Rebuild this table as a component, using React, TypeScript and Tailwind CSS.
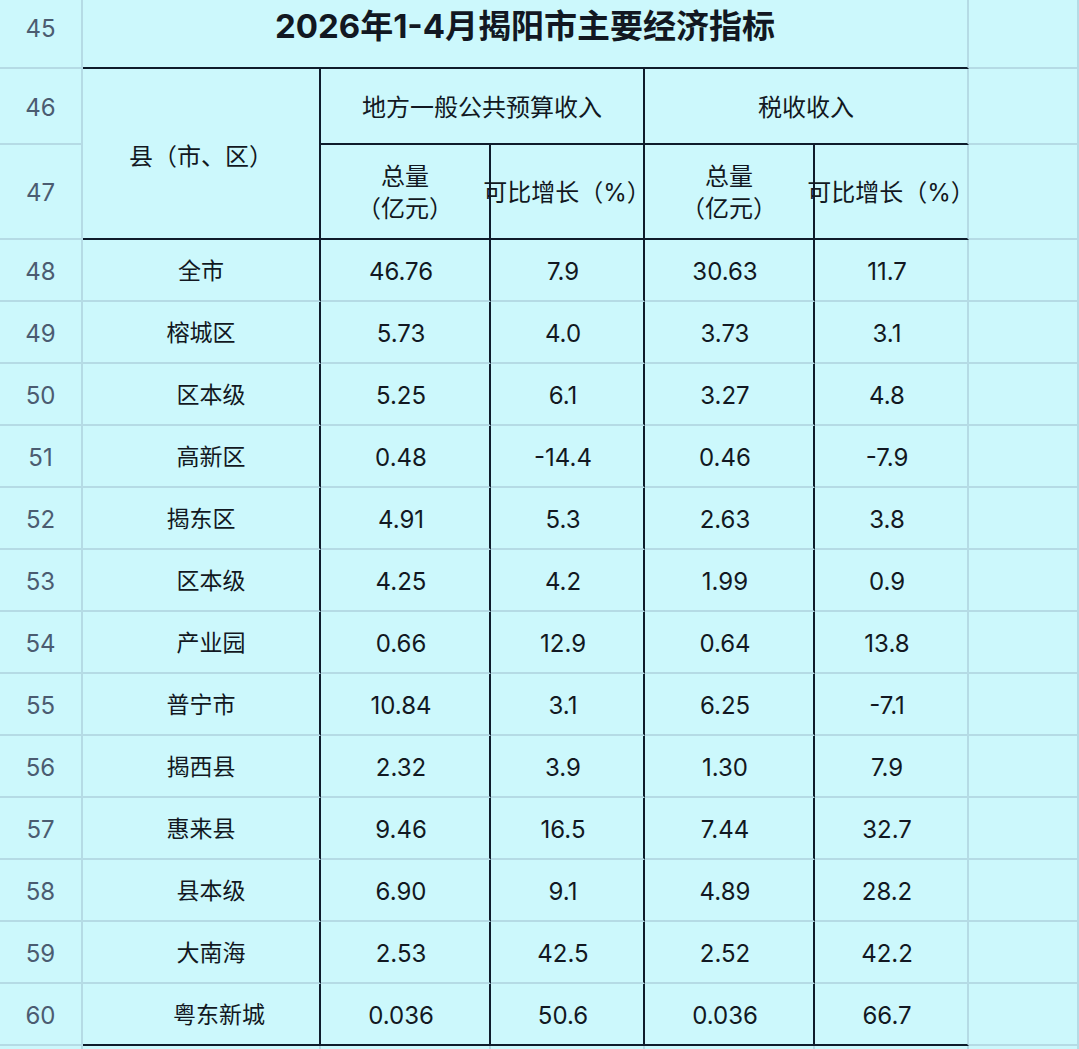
const FONT = "font-['Inter','Noto_Sans_CJK_SC',sans-serif]";

type Row = [number, string, string, string, string, string, string];

// [row no, name, budget total, budget growth, tax total, tax growth, name indent]
const rows: Row[] = [
  [48, "全市", "46.76", "7.9", "30.63", "11.7", ""],
  [49, "榕城区", "5.73", "4.0", "3.73", "3.1", ""],
  [50, "区本级", "5.25", "6.1", "3.27", "4.8", "pl-[20px]"],
  [51, "高新区", "0.48", "-14.4", "0.46", "-7.9", "pl-[20px]"],
  [52, "揭东区", "4.91", "5.3", "2.63", "3.8", ""],
  [53, "区本级", "4.25", "4.2", "1.99", "0.9", "pl-[20px]"],
  [54, "产业园", "0.66", "12.9", "0.64", "13.8", "pl-[20px]"],
  [55, "普宁市", "10.84", "3.1", "6.25", "-7.1", ""],
  [56, "揭西县", "2.32", "3.9", "1.30", "7.9", ""],
  [57, "惠来县", "9.46", "16.5", "7.44", "32.7", ""],
  [58, "县本级", "6.90", "9.1", "4.89", "28.2", "pl-[20px]"],
  [59, "大南海", "2.53", "42.5", "2.52", "42.2", "pl-[20px]"],
  [60, "粤东新城", "0.036", "50.6", "0.036", "66.7", "pl-[36px]"],
];

const cell = "flex items-center justify-center border-b-2 border-r-2 border-[#b5dbe5] pt-[3px] text-[#121822]";
const rowNo = "flex items-center justify-center border-b-2 border-r-2 border-[#b5dbe5] pt-[3px] text-[24px] text-[#4b5c71]";

export default function App() {
  return (
    <div className={`h-[1049px] w-[1079px] overflow-hidden bg-[#ccf8fc] ${FONT}`}>
      <div className="grid grid-cols-[83px_238px_170px_154px_170px_154px_1fr] grid-rows-[69px_76px_95px_repeat(14,62px)]">
        {/* Title row */}
        <div className={`${rowNo} !pt-0 pb-[10px]`}>45</div>
        <div className={`${cell} col-span-5 !pt-0 pb-[14px] text-[33px] font-bold !border-b-[#0f1c2b] text-[#0d121a]`}>
          2026年1-4月揭阳市主要经济指标
        </div>
        <div className={cell} />

        {/* Header rows */}
        <div className={rowNo}>46</div>
        <div className={`${cell} row-span-2 text-[24px] !border-r-[#0f1c2b] !border-b-[#0f1c2b] !pt-[6px]`}>
          县（市、区）
        </div>
        <div className={`${cell} col-span-2 text-[24px] !border-r-[#0f1c2b] !border-b-[#0f1c2b]`}>
          地方一般公共预算收入
        </div>
        <div className={`${cell} col-span-2 text-[24px] !border-b-[#0f1c2b]`}>税收收入</div>
        <div className={cell} />

        <div className={rowNo}>47</div>
        <div className={`${cell} flex-col text-[24px] leading-[32px] !border-r-[#0f1c2b] !border-b-[#0f1c2b]`}>
          <span>总量</span>
          <span>（亿元）</span>
        </div>
        <div className={`${cell} whitespace-nowrap text-[24px] !border-r-[#0f1c2b] !border-b-[#0f1c2b]`}>
          可比增长（%）
        </div>
        <div className={`${cell} flex-col text-[24px] leading-[32px] !border-r-[#0f1c2b] !border-b-[#0f1c2b]`}>
          <span>总量</span>
          <span>（亿元）</span>
        </div>
        <div className={`${cell} whitespace-nowrap text-[24px] !border-b-[#0f1c2b]`}>
          可比增长（%）
        </div>
        <div className={cell} />

        {/* Data rows */}
        {rows.map(([no, name, a, b, c, d, indent], i) => {
          const last = i === rows.length - 1 ? "!border-b-[#0f1c2b]" : "";
          return (
            <div key={no} className="contents">
              <div className={rowNo}>{no}</div>
              <div className={`${cell} ${indent} ${last} text-[23px] !border-r-[#0f1c2b]`}>{name}</div>
              <div className={`${cell} ${last} pr-[8px] text-[24px] !border-r-[#0f1c2b]`}>{a}</div>
              <div className={`${cell} ${last} pr-[8px] text-[24px] !border-r-[#0f1c2b]`}>{b}</div>
              <div className={`${cell} ${last} pr-[8px] text-[24px] !border-r-[#0f1c2b]`}>{c}</div>
              <div className={`${cell} ${last} pr-[8px] text-[24px]`}>{d}</div>
              <div className={cell} />
            </div>
          );
        })}

        {/* Partially visible row below the table */}
        <div className={rowNo} />
        <div className={cell} />
        <div className={cell} />
        <div className={cell} />
        <div className={cell} />
        <div className={cell} />
        <div className={cell} />
      </div>
    </div>
  );
}
